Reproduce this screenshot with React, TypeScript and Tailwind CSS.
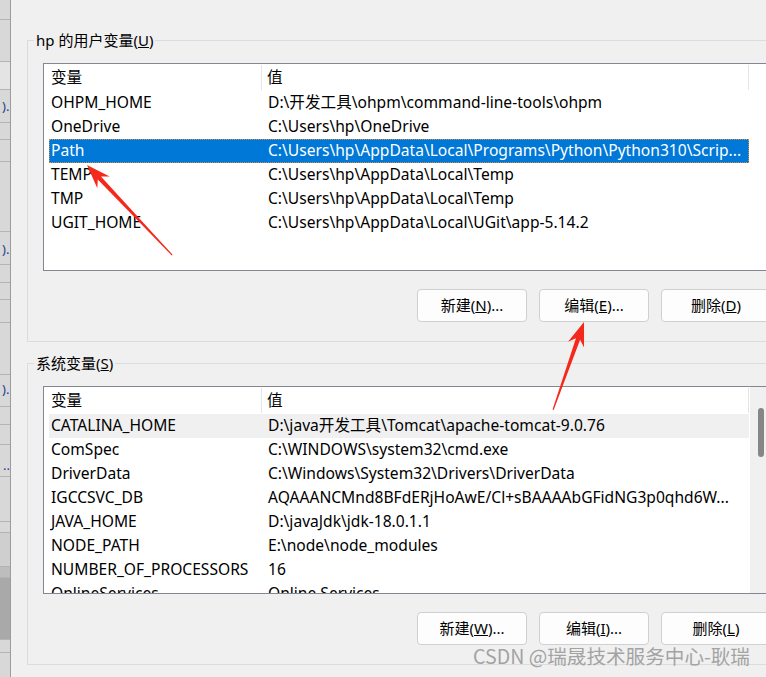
import React from "react";

type Item = { name: string; value: string; state?: "selected" | "hover" };

const userVars: Item[] = [
  { name: "OHPM_HOME", value: "D:\\开发工具\\ohpm\\command-line-tools\\ohpm" },
  { name: "OneDrive", value: "C:\\Users\\hp\\OneDrive" },
  {
    name: "Path",
    value: "C:\\Users\\hp\\AppData\\Local\\Programs\\Python\\Python310\\Scrip...",
    state: "selected",
  },
  { name: "TEMP", value: "C:\\Users\\hp\\AppData\\Local\\Temp" },
  { name: "TMP", value: "C:\\Users\\hp\\AppData\\Local\\Temp" },
  { name: "UGIT_HOME", value: "C:\\Users\\hp\\AppData\\Local\\UGit\\app-5.14.2" },
];

const sysVars: Item[] = [
  { name: "CATALINA_HOME", value: "D:\\java开发工具\\Tomcat\\apache-tomcat-9.0.76", state: "hover" },
  { name: "ComSpec", value: "C:\\WINDOWS\\system32\\cmd.exe" },
  { name: "DriverData", value: "C:\\Windows\\System32\\Drivers\\DriverData" },
  { name: "IGCCSVC_DB", value: "AQAAANCMnd8BFdERjHoAwE/Cl+sBAAAAbGFidNG3p0qhd6W..." },
  { name: "JAVA_HOME", value: "D:\\javaJdk\\jdk-18.0.1.1" },
  { name: "NODE_PATH", value: "E:\\node\\node_modules" },
  { name: "NUMBER_OF_PROCESSORS", value: "16" },
  { name: "OnlineServices", value: "Online Services" },
];

function Row({ name, value, state }: Item) {
  let look = "border-transparent";
  if (state === "selected") look = "bg-[#0078d7] text-white border-dotted border-[#d9913f]";
  if (state === "hover") look = "bg-[#f0f0f0] border-transparent";
  return (
    <div className={`flex h-6 w-[700px] items-center border ${look}`}>
      <div className="w-[211px] pl-px whitespace-nowrap overflow-hidden">{name}</div>
      <div className="flex-1 pl-[7px] whitespace-nowrap overflow-hidden">{value}</div>
    </div>
  );
}

function VarList({ items, scroll }: { items: Item[]; scroll?: boolean }) {
  return (
    <div className="ml-[9px] w-[730px] h-[208px] border border-[#828790] bg-white flex overflow-hidden">
      <div className="flex-1 flex flex-col">
        <div className="flex h-[27px] items-center shrink-0">
          <div className="w-[217px] pl-[7px]">变量</div>
          <div className="w-px h-[25px] bg-[#e5e5e5]" />
          <div className="w-[486px] pl-[5px]">值</div>
          <div className="w-px h-[25px] bg-[#e5e5e5]" />
        </div>
        <div className="pl-[5px]">
          {items.map((it) => (
            <Row key={it.name} {...it} />
          ))}
        </div>
      </div>
      {scroll && (
        <div className="w-[22px] bg-[#f0f0f0] flex justify-center pt-[21px]">
          <div className="w-[6px] h-[49px] rounded-full bg-[#868686]" />
        </div>
      )}
    </div>
  );
}

function Btn({ label, k, tail }: { label: string; k: string; tail: string }) {
  return (
    <button className="w-[110px] h-[33px] rounded-[4px] border border-[#d0d0d0] bg-[#fdfdfd] text-[15px] text-black">
      {label}(<u>{k}</u>){tail}
    </button>
  );
}

function Group({
  title,
  k,
  items,
  scroll,
  keys,
  extra,
}: {
  title: string;
  k: string;
  items: Item[];
  scroll?: boolean;
  keys: [string, string, string];
  extra: string;
}) {
  return (
    <fieldset className={`w-[763px] border border-[#dcdcdc] pl-[6px] pt-[12px] pb-[19px] ${extra}`}>
      <legend className="px-[2px] leading-[22px] text-[15px]">
        {title}(<u>{k}</u>)
      </legend>
      <VarList items={items} scroll={scroll} />
      <div className="ml-[9px] w-[730px] mt-[18px] flex justify-end gap-3 pr-[2px]">
        <Btn label="新建" k={keys[0]} tail="..." />
        <Btn label="编辑" k={keys[1]} tail="..." />
        <Btn label="删除" k={keys[2]} tail="" />
      </div>
    </fieldset>
  );
}

function Strip() {
  const seg = "border-b border-[#b4b4b4] relative";
  return (
    <div className="w-[11px] shrink-0 h-full border-r border-[#9c9c9c] bg-[#d8d8d8] flex flex-col overflow-hidden text-[13px] leading-none text-[#1d3f8f]">
      <div className={`${seg} h-[20px]`} />
      <div className={`${seg} h-[42px]`} />
      <div className={`${seg} h-[28px] bg-[#e4e4e4]`} />
      <div className={`${seg} h-[33px] pt-[10px] pl-[2px]`}>).</div>
      <div className={`${seg} h-[17px]`} />
      <div className={`${seg} h-[22px]`} />
      <div className={`${seg} h-[70px]`} />
      <div className={`${seg} h-[33px] pt-[11px] pl-[2px]`}>).</div>
      <div className={`${seg} h-[18px]`} />
      <div className={`${seg} h-[17px]`} />
      <div className={`${seg} h-[23px]`} />
      <div className={`${seg} h-[52px]`} />
      <div className={`${seg} h-[32px] pt-[8px] pl-[2px]`}>).</div>
      <div className={`${seg} h-[18px]`} />
      <div className={`${seg} h-[20px]`} />
      <div className={`${seg} h-[32px] pt-[14px] pl-[3px]`}>..</div>
      <div className={`${seg} h-[45px]`} />
      <div className={`${seg} h-[11px]`} />
      <div className={`${seg} h-[34px] bg-[#cfcfcf]`} />
      <div className={`${seg} h-[11px] bg-[#bdbdbd]`} />
      <div className={`${seg} h-[62px] bg-[#a9a9a9]`} />
      <div className={`${seg} h-[13px]`} />
      <div className="flex-1" />
    </div>
  );
}

function Arrow({ x, y, angle, len }: { x: number; y: number; angle: number; len: number }) {
  const pts = `0,0 -24,-8.5 -18,-2.2 -${len},-0.6 -${len},0.6 -18,2.2 -24,8.5`;
  return (
    <g transform={`translate(${x} ${y}) rotate(${angle})`}>
      <polygon points={pts} fill="#f5281c" />
    </g>
  );
}

export default function App() {
  return (
    <div className="relative w-[766px] h-[677px] overflow-hidden bg-[#f0f0f0] flex font-['Noto_Sans','Noto_Sans_CJK_SC',sans-serif] text-[15.6px] text-black">
      <Strip />
      <div className="shrink-0 pl-[16px] pt-[29px]">
        <Group
          title="hp 的用户变量"
          k="U"
          items={userVars}
          keys={["N", "E", "D"]}
          extra=""
        />
        <Group
          title="系统变量"
          k="S"
          items={sysVars}
          scroll
          keys={["W", "I", "L"]}
          extra="mt-[10px]"
        />
      </div>

      <svg className="absolute left-0 top-0 pointer-events-none" width="766" height="677">
        <Arrow x={87} y={165} angle={-133.4} len={124} />
        <Arrow x={584} y={322} angle={-70.6} len={93} />
      </svg>

      <div className="absolute left-[473px] top-[644px] text-[19.6px] leading-[24px] whitespace-nowrap text-[#a3a3a3] font-['Noto_Sans_CJK_SC',sans-serif]">
        CSDN @瑞晟技术服务中心-耿瑞
      </div>
    </div>
  );
}
